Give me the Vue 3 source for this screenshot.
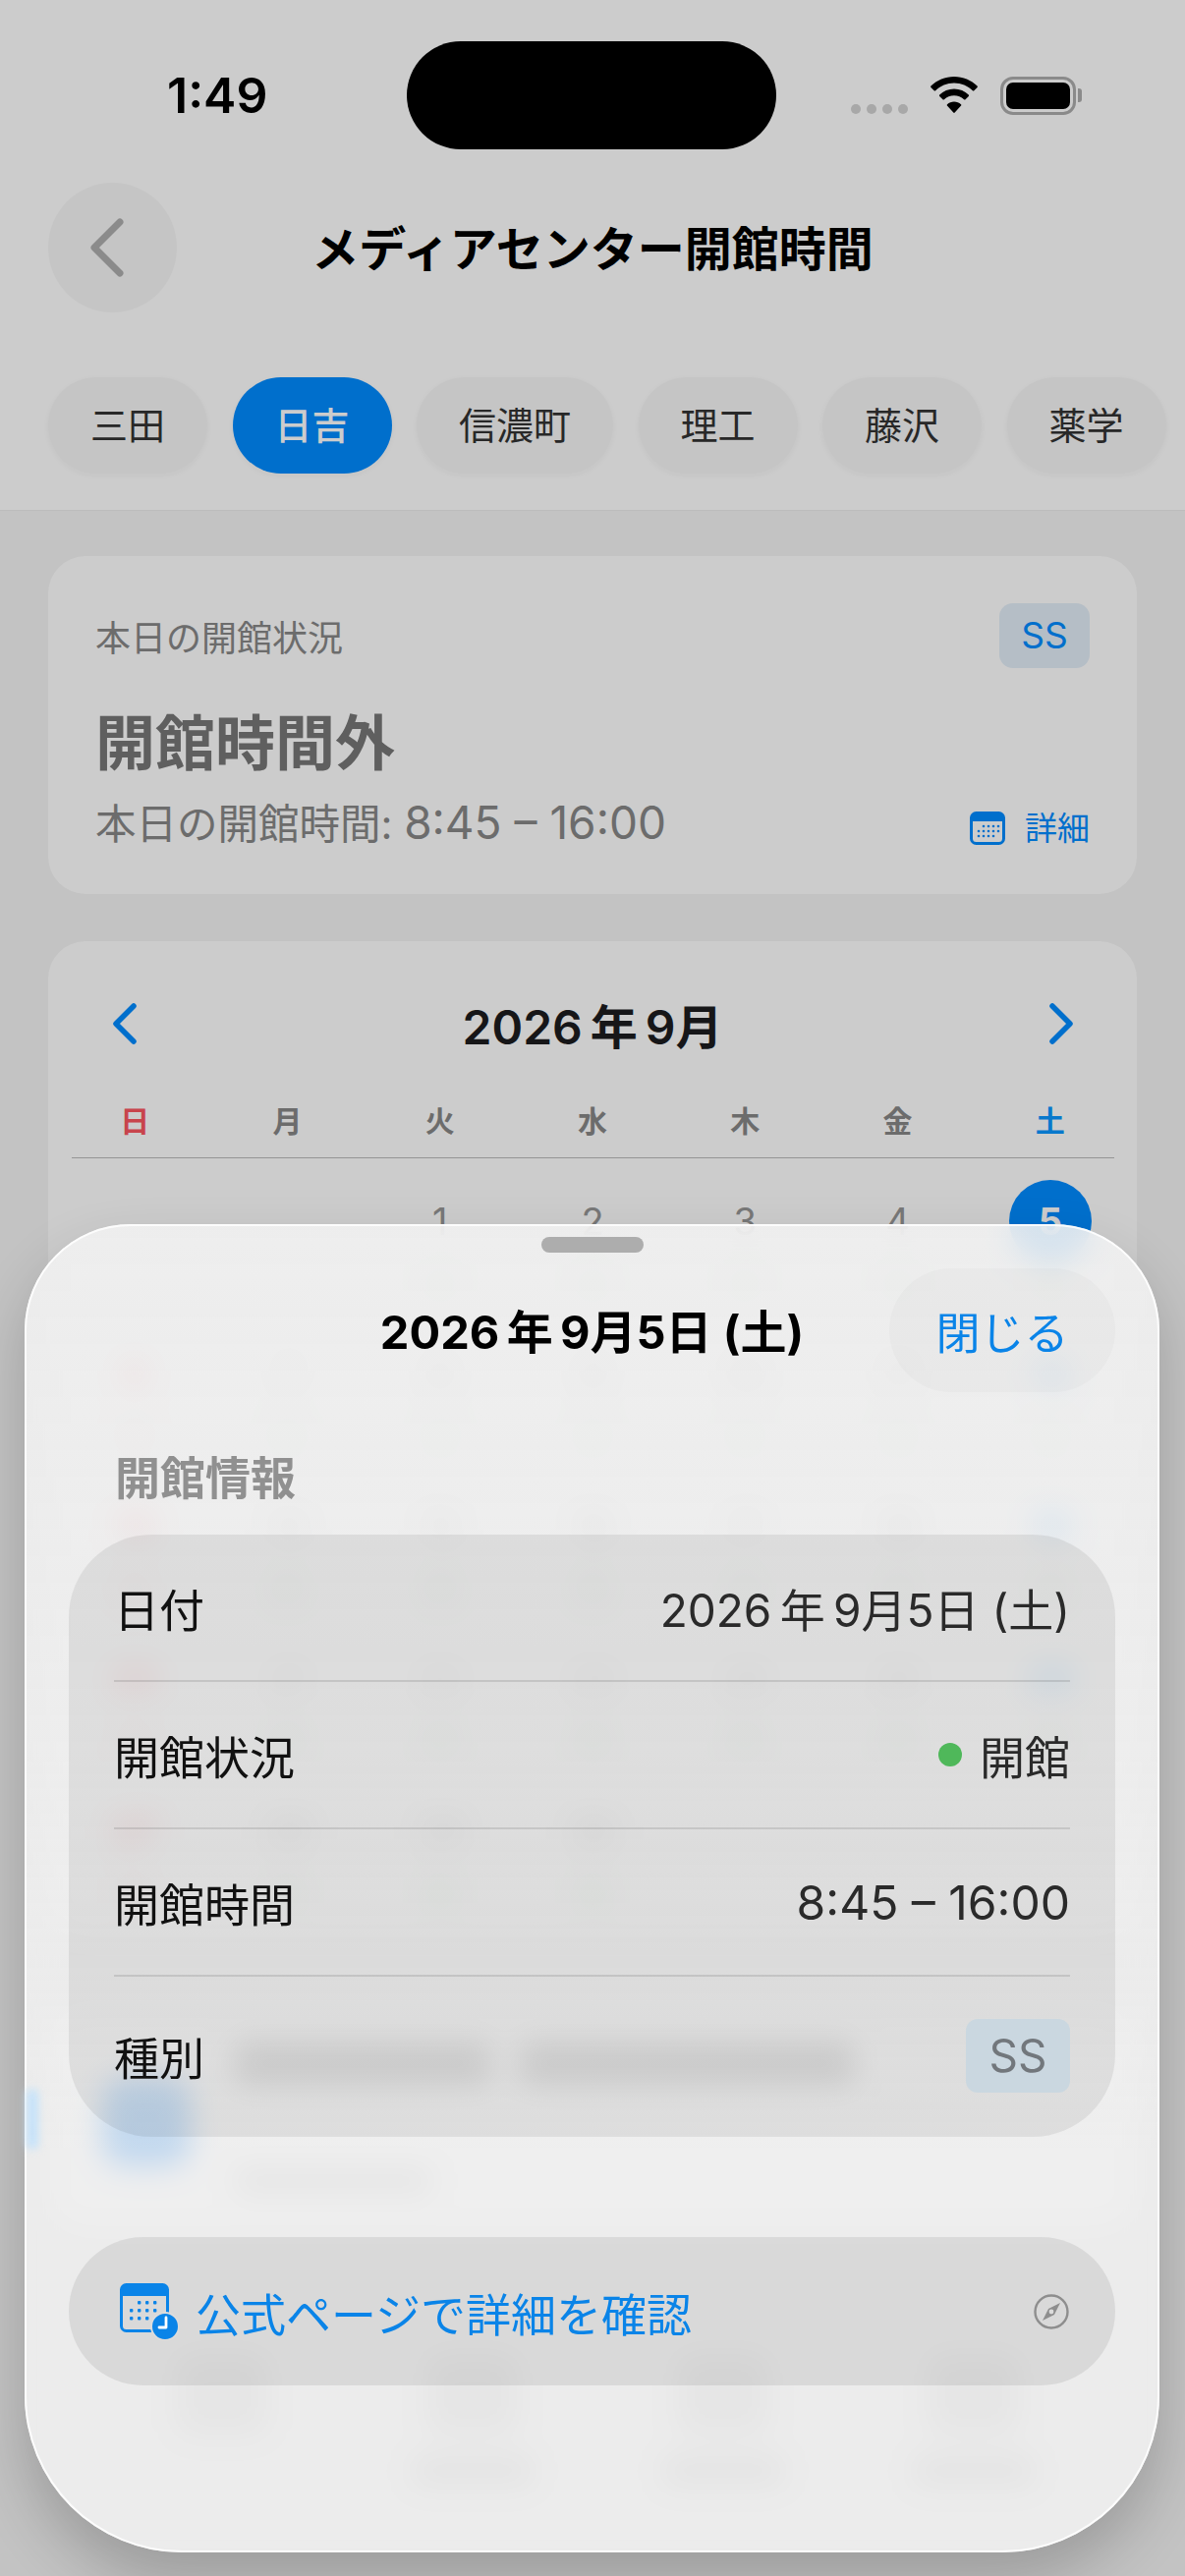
<template>
  <div class="screen">
    <div class="page">
      <header class="top">
        <div class="status">
          <span class="time">1:49</span>
          <div class="island"></div>
          <div class="status-right">
            <div class="signal"><i></i><i></i><i></i><i></i></div>
            <svg class="wifi" viewBox="0 0 50 38" width="50" height="38">
              <path d="M25 0C15.8 0 7.5 3.600 1.400 9.500c-.4.400-.4 1 0 1.400l3.300 3.300c.4.400 1 .4 1.400 0C11 9.500 17.700 6.600 25 6.600s14 2.900 18.900 7.600c.4.400 1 .4 1.400 0l3.300-3.300c.4-.4.4-1 0-1.400C42.500 3.600 34.200 0 25 0z" />
              <path d="M25 12.600c-5.700 0-10.900 2.200-14.800 5.900-.4.4-.4 1 0 1.400l3.300 3.400c.4.4 1 .4 1.400 0 2.700-2.500 6.200-4 10.100-4s7.400 1.500 10.100 4c.4.4 1 .4 1.400 0l3.300-3.400c.4-.4.4-1 0-1.400-3.900-3.700-9.100-5.900-14.800-5.900z" />
              <path d="M25 25.500c-2.700 0-5.100 1-7 2.700-.4.4-.5 1-.1 1.400l6.400 7c.4.4 1 .4 1.400 0l6.400-7c.4-.4.3-1-.1-1.400-1.900-1.700-4.300-2.700-7-2.700z" />
            </svg>
            <div class="battery"><div class="battery-fill"></div></div>
          </div>
        </div>
        <div class="nav">
          <div class="back">
            <svg viewBox="0 0 36 60" width="36" height="60" fill="none" stroke="#aeaeae" stroke-width="7" stroke-linecap="round" stroke-linejoin="round">
              <path d="M31 4 5 30l26 26" />
            </svg>
          </div>
          <h1>メディアセンター開館時間</h1>
          <div class="nav-spacer"></div>
        </div>
        <div class="tabs">
          <div v-for="c in campuses" :key="c" class="tab" :class="{ on: c === '日吉' }">{{ c }}</div>
        </div>
      </header>

      <main class="body">
        <section class="card today">
          <div class="today-head">
            <span class="today-label">本日の開館状況</span>
            <span class="ss">SS</span>
          </div>
          <div class="today-status">開館時間外</div>
          <div class="today-foot">
            <span class="today-hours">本日の開館時間: <span class="today-time">8:45 – 16:00</span></span>
            <span class="detail">
              <svg viewBox="0 0 36 34" width="36" height="34">
                <rect x="1.500" y="1.500" width="33" height="31" rx="5" fill="none" stroke="#008bff" stroke-width="3" />
                <path d="M1.500 10V6.500a5 5 0 0 1 5-5h23a5 5 0 0 1 5 5V10z" fill="#008bff" />
                <g fill="#008bff">
                  <circle v-for="d in miniDots" :key="d[0] + '-' + d[1]" :cx="d[0]" :cy="d[1]" r="1.300" />
                </g>
              </svg>
              詳細
            </span>
          </div>
        </section>

        <section class="card cal">
          <div class="cal-head">
            <svg viewBox="0 0 28 44" width="28" height="44" fill="none" stroke="#008bff" stroke-width="5.500" stroke-linecap="round" stroke-linejoin="round">
              <path d="M23 4 5 22l18 18" />
            </svg>
            <span class="cal-title">2026&thinsp;年&thinsp;9月</span>
            <svg viewBox="0 0 28 44" width="28" height="44" fill="none" stroke="#008bff" stroke-width="5.500" stroke-linecap="round" stroke-linejoin="round">
              <path d="m5 4 18 18L5 40" />
            </svg>
          </div>
          <div class="week">
            <span v-for="(w, i) in weekdays" :key="w" :class="{ sun: i === 0, sat: i === 6 }">{{ w }}</span>
          </div>
          <div class="week-line"></div>
          <div class="days">
            <div v-for="(d, i) in cells" :key="i" class="day" :class="{ sun: i % 7 === 0, sat: i % 7 === 6, sel: d === 5 }">
              <span class="num">{{ d }}</span>
              <i v-if="d" class="dot"></i>
            </div>
          </div>
        </section>

        <section class="card notice">
          <div class="notice-icon"></div>
          <div class="notice-lines">
            <div class="long-row">
              <div class="bar long-a"></div>
              <div class="bar long-b"></div>
            </div>
            <div class="bar short"></div>
          </div>
        </section>

        <section class="links">
          <div v-for="n in 4" :key="n" class="link-item">
            <div class="link-icon"></div>
            <div v-if="n > 1" class="bar link-label"></div>
          </div>
        </section>
      </main>
    </div>

    <div class="scrim"></div>

    <div class="sheet">
      <div class="glint"></div>
      <div class="grabber"></div>
      <div class="sheet-head">
        <span class="sheet-title">2026&thinsp;年&thinsp;9月5日&nbsp;(土)</span>
        <button class="close">閉じる</button>
      </div>
      <div class="section-title">開館情報</div>
      <div class="list">
        <div class="row">
          <span>日付</span>
          <span class="val">2026&thinsp;年&thinsp;9月5日&nbsp;(土)</span>
        </div>
        <div class="row">
          <span>開館状況</span>
          <span class="val open"><i class="green"></i>開館</span>
        </div>
        <div class="row">
          <span>開館時間</span>
          <span class="val hours">8:45 – 16:00</span>
        </div>
        <div class="row">
          <span>種別</span>
          <span class="ss-big">SS</span>
        </div>
      </div>
      <div class="official">
        <svg class="official-icon" viewBox="0 0 60 58" width="60" height="58">
          <rect x="1.500" y="1.500" width="47" height="47" rx="5" fill="none" stroke="#0a84e8" stroke-width="3" />
          <path d="M1 13V6a5 5 0 0 1 5-5h38a5 5 0 0 1 5 5v7z" fill="#0a84e8" />
          <g fill="#0a84e8">
            <rect v-for="d in bigDots" :key="d[0] + '-' + d[1]" :x="d[0]" :y="d[1]" width="3.400" height="3.400" rx="1" />
          </g>
          <circle cx="46" cy="44" r="14" fill="#0a84e8" stroke="#dcdcdc" stroke-width="2" />
          <path d="M47 35v10h-7" fill="none" stroke="#fff" stroke-width="2.800" stroke-linecap="round" stroke-linejoin="round" />
        </svg>
        <span class="official-text">公式ページで詳細を確認</span>
        <svg class="compass" viewBox="0 0 36 36" width="36" height="36">
          <circle cx="18" cy="18" r="16.500" fill="none" stroke="#8e8e8e" stroke-width="2.400" />
          <path d="M27 9 15 15l-6 12 12-6z" fill="#8e8e8e" />
          <circle cx="18" cy="18" r="2.400" fill="#dcdcdc" />
        </svg>
      </div>
    </div>
  </div>
</template>

<script setup>
const campuses = ['三田', '日吉', '信濃町', '理工', '藤沢', '薬学']
const weekdays = ['日', '月', '火', '水', '木', '金', '土']

// Sep 2026 starts on a Tuesday
const cells = ['', '']
for (let d = 1; d <= 30; d++) cells.push(d)

const miniDots = []
for (const y of [15, 20, 25]) {
  for (const x of [9, 14, 19, 24, 29]) {
    if ((y === 15 && x < 14) || (y === 25 && x > 24)) continue
    miniDots.push([x, y])
  }
}

const bigDots = []
for (const y of [18, 26, 34]) {
  for (const x of [10, 18, 26, 34]) {
    if (y === 18 && x === 10) continue
    if (y === 34 && x === 34) continue
    bigDots.push([x, y])
  }
}
</script>

<style scoped>
.screen {
  position: relative;
  width: 1206px;
  height: 2622px;
  overflow: hidden;
  font-family: Inter, "Noto Sans CJK JP", sans-serif;
  background: #f4f4f4;
  color: #1c1c1e;
}

.page {
  display: flex;
  flex-direction: column;
  height: 100%;
}

.top {
  background: #fff;
  height: 520px;
  flex-shrink: 0;
  border-bottom: 1px solid #ececec;
  box-sizing: border-box;
  padding-top: 42px;
}

.status {
  position: relative;
  display: flex;
  justify-content: space-between;
  height: 110px;
  padding: 0 111px 0 170px;
}

.time {
  font-size: 50px;
  font-weight: 600;
  line-height: 110px;
  color: #000;
}

.island {
  position: absolute;
  left: 414px;
  top: 0;
  width: 376px;
  height: 110px;
  border-radius: 55px;
  background: #000;
}

.status-right {
  display: flex;
  align-items: center;
  height: 110px;
}

.signal {
  display: flex;
  gap: 6px;
  margin-top: 28px;
  margin-right: 22px;
}

.signal i {
  width: 10px;
  height: 10px;
  border-radius: 50%;
  background: #d2d2d2;
}

.wifi {
  fill: #000;
  margin-right: 22px;
}

.battery {
  position: relative;
  box-sizing: border-box;
  width: 77px;
  height: 39px;
  border: 3.500px solid #adadad;
  border-radius: 13px;
  padding: 3px;
}

.battery::after {
  content: '';
  position: absolute;
  right: -9px;
  top: 9px;
  width: 4px;
  height: 14px;
  background: #adadad;
  border-radius: 0 3px 3px 0;
}

.battery-fill {
  height: 100%;
  background: #000;
  border-radius: 7px;
}

.nav {
  display: flex;
  align-items: center;
  justify-content: space-between;
  height: 132px;
  margin-top: 34px;
  padding: 0 49px;
}

.back {
  width: 131px;
  height: 132px;
  border-radius: 50%;
  background: #f7f7f7;
  display: flex;
  align-items: center;
  justify-content: center;
  padding-right: 12px;
  box-sizing: border-box;
}

h1 {
  margin: -5px 0 0;
  font-size: 48px;
  font-weight: 700;
  color: #000;
}

.nav-spacer {
  width: 131px;
}

.tabs {
  display: flex;
  gap: 25.500px;
  margin-top: 66px;
  padding-left: 49px;
}

.tab {
  height: 98px;
  line-height: 98px;
  padding: 0 43px;
  border-radius: 49px;
  background: #f7f7f7;
  box-shadow: 0 2px 6px rgba(0, 0, 0, 0.04);
  font-size: 38px;
  color: #333;
  white-space: nowrap;
}

.tab.on {
  background: #008bff;
  color: #fff;
  font-weight: 500;
}

.body {
  flex: 1;
  padding: 46px 49px 0;
  display: flex;
  flex-direction: column;
  gap: 48px;
}

.card {
  background: #fff;
  border-radius: 38px;
}

.today {
  box-sizing: border-box;
  height: 344px;
  padding: 48px 48px 0;
}

.today-head {
  display: flex;
  justify-content: space-between;
  align-items: center;
}

.today-label {
  font-size: 36px;
  color: #888;
}

.ss {
  width: 92px;
  height: 66px;
  line-height: 66px;
  text-align: center;
  border-radius: 14px;
  background: #e3eef8;
  color: #008bff;
  font-size: 37px;
}

.today-status {
  margin-top: 37px;
  font-size: 61px;
  line-height: 80px;
  font-weight: 700;
  color: #777;
}

.today-foot {
  display: flex;
  justify-content: space-between;
  align-items: flex-end;
  margin-top: 12px;
}

.today-hours {
  font-size: 41.500px;
  line-height: 56px;
  color: #888;
}

.today-time {
  font-size: 46px;
}

.detail {
  display: flex;
  align-items: center;
  gap: 20px;
  font-size: 33px;
  line-height: 48px;
  color: #008bff;
}

.cal {
  padding: 40px 10.500px 0;
  height: 1010px;
  box-sizing: border-box;
}

.cal-head {
  display: flex;
  justify-content: space-between;
  align-items: center;
  height: 88px;
  padding: 0 53px;
}

.cal-title {
  font-size: 48px;
  font-weight: 600;
  color: #1c1c1e;
}

.week {
  display: grid;
  grid-template-columns: repeat(7, 1fr);
  margin-top: 22px;
  height: 70px;
  text-align: center;
  font-size: 30px;
  line-height: 66px;
  font-weight: 600;
  color: #888;
}

.week-line {
  height: 1px;
  margin: 0 13px;
  background: #bbb;
}

.sun {
  color: #fb555f;
}

.sat {
  color: #0a96ff;
}

.days {
  display: grid;
  grid-template-columns: repeat(7, 1fr);
  grid-auto-rows: 155px;
  margin-top: 22px;
}

.day {
  display: flex;
  flex-direction: column;
  align-items: center;
  font-size: 38px;
  color: #969696;
}

.day.sun {
  color: #fb555f;
  font-weight: 700;
}

.day.sat {
  color: #0a96ff;
  font-weight: 700;
}

.num {
  width: 84px;
  height: 84px;
  line-height: 84px;
  border-radius: 50%;
  text-align: center;
}

.sel .num {
  background: #008bff;
  color: #fff;
  font-weight: 700;
}

.dot {
  width: 26px;
  height: 26px;
  margin-top: 8px;
  border-radius: 50%;
  background: #cfeed3;
}

.sun .dot {
  background: #f9cfcf;
}

.notice {
  display: flex;
  align-items: center;
  gap: 45px;
  height: 230px;
  padding: 0 55px;
  margin-top: 24px;
}

.notice-icon {
  width: 90px;
  height: 90px;
  margin-top: 10px;
  border-radius: 24px;
  background: #55aaff;
}

.bar {
  background: #a8a8a8;
  border-radius: 8px;
}

.notice-lines {
  display: flex;
  flex-direction: column;
  gap: 85px;
}

.long-row {
  display: flex;
  gap: 30px;
}

.bar.long-a {
  width: 260px;
  height: 44px;
}

.bar.long-b {
  width: 340px;
  height: 44px;
}

.bar.short {
  width: 200px;
  height: 26px;
  background: #dedede;
}

.links {
  display: flex;
  padding-left: 49px;
  margin-top: 80px;
}

.link-item {
  display: flex;
  flex-direction: column;
  align-items: center;
  gap: 24px;
  width: 255px;
}

.link-icon {
  width: 90px;
  height: 80px;
  border-radius: 14px;
  background: #dcdcdc;
}

.link-label {
  width: 120px;
  height: 26px;
  background: #d0d0d0;
}

.scrim {
  position: absolute;
  inset: 0;
  background: rgba(0, 0, 0, 0.2);
}

.sheet {
  position: absolute;
  left: 25px;
  top: 1246px;
  width: 1155px;
  height: 1352px;
  box-sizing: border-box;
  border-radius: 108px 108px 160px 160px;
  background: linear-gradient(180deg, rgba(242, 242, 242, 0.88) 0, rgba(246, 246, 246, 0.8) 40%, rgba(255, 255, 255, 0.68) 70%);
  -webkit-backdrop-filter: blur(15px);
  backdrop-filter: blur(15px);
  box-shadow: 0 30px 60px rgba(0, 0, 0, 0.2), inset 0 0 0 2px rgba(255, 255, 255, 0.85);
  padding: 13px 45px 0;
}

.glint {
  position: absolute;
  left: 2px;
  top: 880px;
  width: 12px;
  height: 62px;
  border-radius: 6px;
  background: #c4e2fa;
  filter: blur(4px);
}

.grabber {
  width: 104px;
  height: 16px;
  margin: 0 auto;
  border-radius: 8px;
  background: #adadad;
}

.sheet-head {
  position: relative;
  display: flex;
  justify-content: center;
  align-items: center;
  height: 128px;
  margin-top: 16px;
}

.sheet-title {
  margin-top: -6px;
  font-size: 47px;
  font-weight: 700;
  color: #000;
}

.close {
  position: absolute;
  right: 0;
  top: 0;
  width: 230px;
  height: 126px;
  border: none;
  border-radius: 63px;
  background: rgba(0, 0, 0, 0.025);
  font: inherit;
  font-size: 45px;
  color: #0a84e8;
}

.section-title {
  margin-top: 54px;
  margin-left: 47px;
  font-size: 46px;
  line-height: 62px;
  font-weight: 700;
  color: #909090;
}

.list {
  margin-top: 27px;
  height: 613px;
  box-sizing: border-box;
  border-radius: 84px;
  background: rgba(0, 0, 0, 0.07);
  padding: 0 46px;
  display: flex;
  flex-direction: column;
}

.row {
  display: flex;
  justify-content: space-between;
  align-items: center;
  height: 150px;
  flex-shrink: 0;
  border-bottom: 2px solid rgba(0, 0, 0, 0.11);
  box-sizing: border-box;
  font-size: 46px;
  color: #111;
}

.row:last-child {
  border-bottom: none;
  height: 160px;
}

.val {
  color: #2a2a2a;
}

.hours {
  font-size: 48px;
}

.open {
  display: flex;
  align-items: center;
  gap: 18px;
}

.green {
  width: 24px;
  height: 24px;
  border-radius: 50%;
  background: #4fb85a;
}

.ss-big {
  width: 106px;
  height: 75px;
  line-height: 75px;
  text-align: center;
  border-radius: 12px;
  background: #cad7e0;
  color: #72777c;
  font-size: 46px;
}

.official {
  display: flex;
  align-items: center;
  height: 151px;
  margin-top: 102px;
  padding: 0 47px 0 52px;
  border-radius: 76px;
  background: rgba(0, 0, 0, 0.08);
}

.official-icon {
  flex-shrink: 0;
}

.official-text {
  flex: 1;
  margin-left: 17px;
  font-size: 46px;
  color: #0a84e8;
}
</style>

<style>
html, body {
  margin: 0;
  background: #f4f4f4;
}
</style>
